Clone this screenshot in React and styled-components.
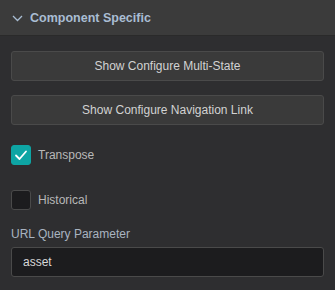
import styled, { createGlobalStyle } from "styled-components";

const Global = createGlobalStyle`
html, body {
    margin: 0;
    padding: 0;
    background: #2e2e30;
    font-family: "Liberation Sans", Arial, sans-serif;
}
`;

const Panel = styled.section`
width: 335px;
height: 290px;
background: #2e2e30;
overflow: hidden;
`;

const Header = styled.div`
height: 36px;
box-sizing: border-box;
background: #3b3b3b;
border-bottom: 1px solid #2a2a2a;
display: flex;
align-items: center;
padding-left: 11px;
gap: 6px;
color: #a9bdd3;
font-weight: bold;
font-size: 12.5px;
`;

const Body = styled.div`
padding: 15px 11px 0;
display: flex;
flex-direction: column;
`;

const Button = styled.button`
height: 30px;
width: 100%;
box-sizing: border-box;
background: #3a3a3a;
border: 1px solid #4a4a4a;
border-radius: 3px;
color: #d2d2d2;
font-family: "Liberation Sans", Arial, sans-serif;
font-size: 12px;
margin-bottom: ${(p) => p.$gap}px;
`;

const CheckRow = styled.label`
display: flex;
align-items: center;
gap: 7px;
height: 20px;
color: #b8b8b8;
font-size: 12px;
margin-bottom: ${(p) => p.$gap}px;
`;

const Box = styled.span`
width: 20px;
height: 20px;
box-sizing: border-box;
border-radius: 3px;
display: flex;
align-items: center;
justify-content: center;
background: ${(p) => (p.$checked ? "#0ea5a4" : "#1c1c1e")};
border: 1px solid ${(p) => (p.$checked ? "#0ea5a4" : "#4a4a4a")};
`;

const Label = styled.div`
color: #a9b4c0;
font-size: 12px;
margin-bottom: 6px;
`;

const Input = styled.div`
height: 30px;
box-sizing: border-box;
background: #1c1c1e;
border: 1px solid #4a4a4a;
border-radius: 3px;
display: flex;
align-items: center;
padding-left: 11px;
color: #d8d8d8;
font-size: 12px;
`;

const Checkbox = ({ checked, label, gap }) => (
    <CheckRow $gap={gap}>
        <Box $checked={checked}>
            {checked && (
                <svg width="14" height="14" viewBox="0 0 14 14">
                    <path d="M2 7.5 L5.5 11 L12 3.5" stroke="#fff" strokeWidth="1.8" fill="none" strokeLinecap="round" strokeLinejoin="round" />
                </svg>
            )}
        </Box>
        {label}
    </CheckRow>
);

const App = () => {
    return (
        <Panel>
            <Global />
            <Header>
                <svg width="13" height="12" viewBox="0 0 13 12">
                    <path d="M2 4 L6.5 8.5 L11 4" stroke="#a9bdd3" strokeWidth="1.3" fill="none" />
                </svg>
                Component Specific
            </Header>
            <Body>
                <Button $gap={14}>Show Configure Multi-State</Button>
                <Button $gap={20}>Show Configure Navigation Link</Button>
                <Checkbox checked label="Transpose" gap={25} />
                <Checkbox label="Historical" gap={17} />
                <Label>URL Query Parameter</Label>
                <Input>asset</Input>
            </Body>
        </Panel>
    );
};

export default App;
